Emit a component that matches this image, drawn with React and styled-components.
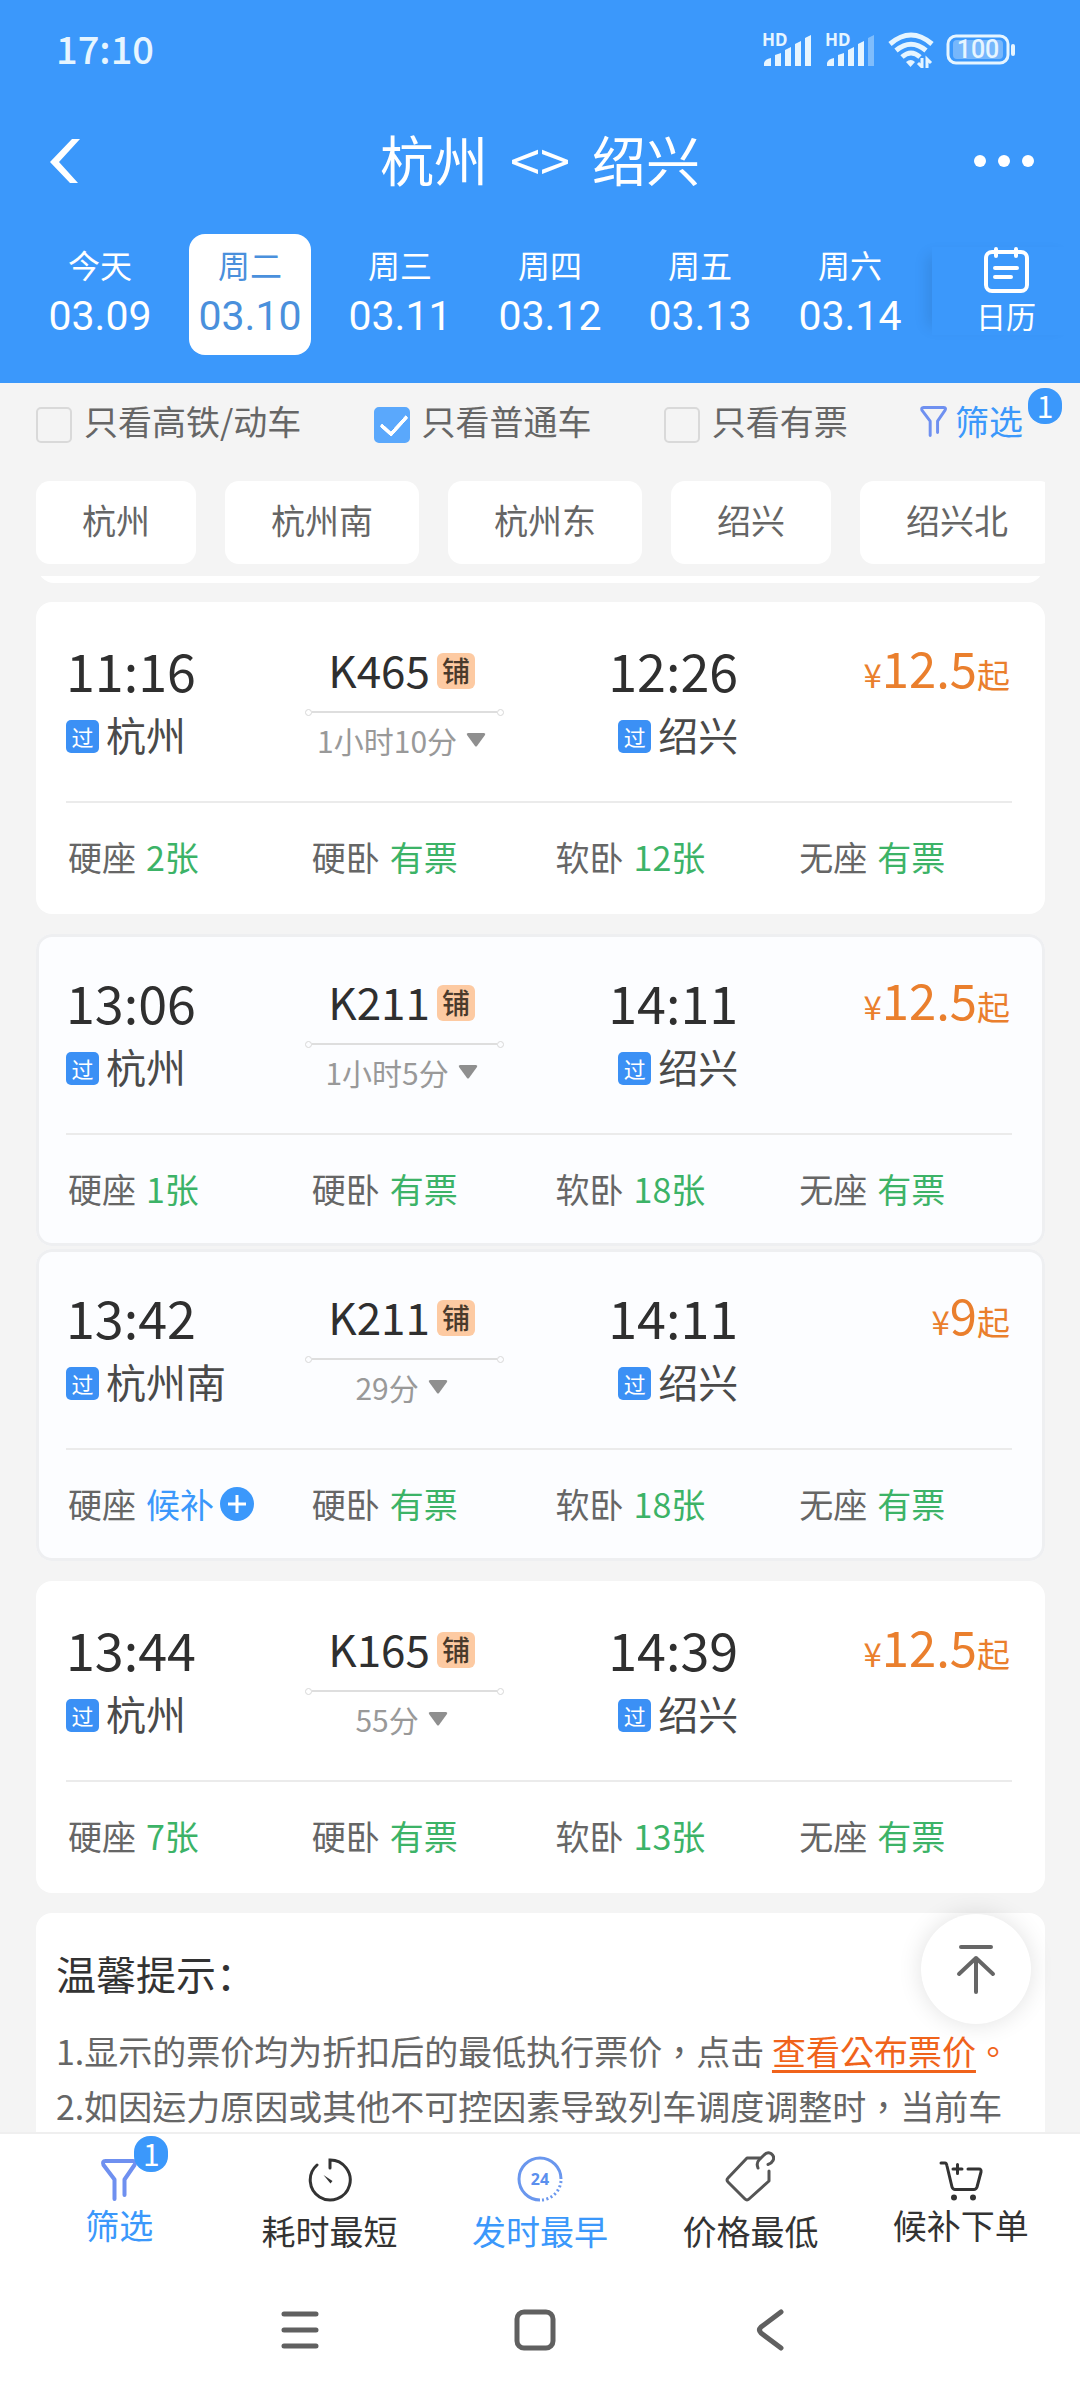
import React, { useState } from 'react';
import styled, { createGlobalStyle, css } from 'styled-components';

const GlobalStyle = createGlobalStyle`
  * {
    box-sizing: border-box;
  }

  body {
    margin: 0;
    background: #f4f4f4;
    font-family: 'Noto Sans CJK SC', sans-serif;
    color: #333;
  }

  button {
    border: none;
    background: none;
    padding: 0;
    font: inherit;
    color: inherit;
    cursor: pointer;
  }

  svg {
    display: block;
    flex: none;
  }
`;

const Page = styled.div`
  display: flex;
  flex-direction: column;
  height: 100vh;
`;

const Header = styled.header`
  flex: none;
  background: #3b98fb;
  color: #fff;
`;

const StatusBar = styled.div`
  display: flex;
  align-items: center;
  justify-content: space-between;
  height: 100px;
  padding: 0 64px 0 56px;
  color: #e6f5ff;
`;

const Clock = styled.span`
  padding-bottom: 4px;
  font-size: 38px;
  font-weight: 500;
  line-height: 44px;
`;

const StatusIcons = styled.div`
  display: flex;
  align-items: center;
  gap: 12px;
`;

const TitleBar = styled.div`
  display: flex;
  align-items: center;
  justify-content: space-between;
  height: 122px;
  padding: 0 45px;
`;

const Title = styled.h1`
  display: flex;
  gap: 22px;
  margin: 0;
  font-size: 54px;
  font-weight: 400;
  line-height: 60px;
  padding-bottom: 4px;
`;

const IconButton = styled.button`
  display: flex;
  align-items: center;
  width: 64px;
  justify-content: ${(props) => (props.$end ? 'flex-end' : 'flex-start')};
`;

const DateBar = styled.nav`
  display: flex;
  padding: 12px 0 28px 25px;
`;

const DateList = styled.div`
  display: flex;
  flex: 900;
`;

const DateButton = styled.button`
  display: flex;
  flex-direction: column;
  align-items: center;
  flex: 1;
  height: 121px;
  margin: 0 14px;
  padding-top: 7px;
  border-radius: 16px;
  white-space: nowrap;

  ${(props) =>
    props.$active &&
    css`
      background: #fff;
      color: #4a90dc;
    `}
`;

const Weekday = styled.span`
  font-size: 32px;
  line-height: 46px;
`;

const DayNumber = styled.span`
  margin-top: 4px;
  font-family: Roboto, sans-serif;
  font-size: 41px;
  line-height: 50px;
`;

const CalendarButton = styled.button`
  display: flex;
  flex-direction: column;
  align-items: center;
  flex: 148;
  height: 88px;
  margin: 13px 0 0 7px;
  font-size: 30px;
  line-height: 44px;
  background: #3b98fb;
  box-shadow: -12px 0 14px -8px rgba(0, 0, 0, 0.1);
`;

const Filters = styled.div`
  display: flex;
  align-items: center;
  justify-content: space-between;
  flex: none;
  height: 84px;
  padding: 0 57px 0 36px;
  font-size: 34px;
  line-height: 50px;
  color: #666;
`;

const FilterLabel = styled.label`
  display: flex;
  align-items: center;
  gap: 12px;

  span {
    padding-bottom: 8px;
  }
`;

const Checkbox = styled.input`
  position: relative;
  appearance: none;
  width: 36px;
  height: 36px;
  margin: 0;
  border: 2px solid #d9d9d9;
  border-radius: 5px;

  &:checked {
    border-color: #5aa8fc;
    background: #5aa8fc;
  }

  &:checked::after {
    content: '';
    position: absolute;
    left: 5px;
    top: 5px;
    width: 22px;
    height: 12px;
    border-left: 4px solid #fff;
    border-bottom: 4px solid #fff;
    border-radius: 2px;
    transform: rotate(-48deg);
  }
`;

const FilterButton = styled.button`
  position: relative;
  display: flex;
  align-items: center;
  gap: 8px;
  padding-bottom: 8px;
  color: #3b98fb;
`;

const Badge = styled.span`
  position: absolute;
  top: -8px;
  left: 100%;
  width: 34px;
  height: 36px;
  margin-left: 5px;
  border-radius: 16px;
  background: #3b98fb;
  color: #fff;
  font-size: 30px;
  line-height: 34px;
  text-align: center;
`;

const Stations = styled.div`
  display: flex;
  flex: none;
  gap: 29px;
  margin: 14px 35px 12px 36px;
  overflow: hidden;
`;

const StationChip = styled.button`
  flex: none;
  height: 83px;
  padding: 0 46px 6px;
  border-radius: 14px;
  background: #fff;
  color: #666;
  font-size: 34px;
  line-height: 50px;
`;

const Results = styled.main`
  position: relative;
  flex: 1;
  min-height: 0;
  padding: 0 35px 0 36px;
  overflow: hidden;
`;

const ScrolledCard = styled.div`
  display: flex;
  align-items: flex-end;
  height: 7px;
  margin-bottom: 19px;
  overflow: hidden;

  &::before {
    content: '';
    flex: 1;
    height: 40px;
    margin: 0 2px;
    border-radius: 16px;
    background: #fff;
  }
`;

const Card = styled.article`
  height: 312px;
  margin-bottom: ${(props) => (props.$joined ? '3px' : '20px')};
  padding: 0 33px 0 30px;
  border-radius: 16px;
  background: ${(props) => (props.$grouped ? '#fcfdff' : '#fff')};
  box-shadow: ${(props) => (props.$grouped ? 'inset 0 0 0 3px #eeeff1' : 'none')};
`;

const Trip = styled.div`
  display: grid;
  grid-template-columns: 48fr 40fr 47fr 55fr;
  height: 201px;
  padding-top: 38px;
  border-bottom: 2px solid #ebebeb;
`;

const Stop = styled.div`
  display: flex;
  flex-direction: column;
  align-items: ${(props) => (props.$end ? 'flex-end' : 'flex-start')};
`;

const Time = styled.span`
  font-size: 52px;
  line-height: 60px;
  color: #2f2f2f;
`;

const StopName = styled.span`
  display: flex;
  align-items: center;
  gap: 7px;
  font-size: 40px;
  line-height: 68px;
  color: #4a4a4a;
`;

const PassTag = styled.span`
  width: 33px;
  height: 33px;
  margin-top: 4px;
  border-radius: 5px;
  background: #3b90f5;
  color: #fff;
  font-size: 22px;
  line-height: 32px;
  text-align: center;
`;

const Train = styled.div`
  display: flex;
  flex-direction: column;
  align-items: center;
`;

const TrainNumber = styled.span`
  display: flex;
  align-items: center;
  gap: 7px;
  padding-right: 6px;
  font-size: 44px;
  line-height: 58px;
  color: #2f2f2f;
`;

const BerthTag = styled.span`
  width: 38px;
  height: 36px;
  margin-top: 4px;
  border-radius: 6px;
  background: #fdcaa2;
  color: #4a3a2c;
  font-size: 28px;
  font-weight: 500;
  line-height: 34px;
  text-align: center;
`;

const TrackLine = styled.div`
  display: flex;
  align-items: center;
  width: 100%;
  height: 6px;
  margin-top: 11px;

  &::before,
  &::after {
    content: '';
    width: 5px;
    height: 5px;
    border: 1px solid #d8d8d8;
    border-radius: 50%;
  }

  span {
    flex: 1;
    height: 2px;
    background: #dedede;
  }
`;

const Duration = styled.button`
  display: flex;
  align-items: center;
  gap: 9px;
  padding-right: 6px;
  font-size: 30px;
  line-height: 50px;
  color: #999;
`;

const Price = styled.div`
  display: flex;
  align-items: baseline;
  justify-content: flex-end;
  padding-right: 2px;
  font-size: 33px;
  line-height: 54px;
  color: #ea7f2d;

  strong {
    font-size: 49px;
    font-weight: 400;
  }
`;

const Seats = styled.div`
  display: grid;
  grid-template-columns: 47fr 47fr 47fr 41fr;
  align-items: center;
  height: 108px;
  padding-left: 2px;
  font-size: 34px;
  line-height: 50px;
  color: #666;
  white-space: nowrap;
`;

const Seat = styled.div`
  display: flex;
  align-items: center;
  gap: 10px;
`;

const SeatLeft = styled.span`
  display: flex;
  align-items: center;
  gap: 6px;
  color: ${(props) => (props.$waitlist ? '#3b98fb' : '#3cb367')};
`;

const Notice = styled.section`
  padding: 28px 20px 40px;
  border-radius: 16px;
  background: #fff;
  color: #666;
  font-family: 'Noto Sans CJK TC', sans-serif;
  font-size: 34px;
  line-height: 55px;

  h2 {
    margin: 0 0 18px;
    color: #333;
    font-family: 'Noto Sans CJK SC', sans-serif;
    font-size: 40px;
    font-weight: 400;
    line-height: 64px;
  }

  p {
    margin: 0;
    white-space: nowrap;
  }
`;

const FareLink = styled.span`
  color: #f0631b;

  a {
    color: inherit;
    text-decoration-thickness: 3px;
    text-underline-offset: 5px;
  }
`;

const BackToTop = styled.button`
  position: absolute;
  right: 49px;
  bottom: 108px;
  display: flex;
  align-items: center;
  justify-content: center;
  width: 110px;
  height: 110px;
  border-radius: 50%;
  background: #fff;
  box-shadow: 0 0 24px rgba(0, 0, 0, 0.12);
`;

const TabBar = styled.nav`
  display: flex;
  flex: none;
  height: 128px;
  padding: 0 14px;
  border-top: 2px solid #efefef;
  background: #fff;
`;

const Tab = styled.button`
  display: flex;
  flex: 1;
  flex-direction: column;
  align-items: center;
  height: 120px;
  color: ${(props) => (props.$active ? '#3b98fb' : '#333')};
  font-size: 34px;
  line-height: 44px;
`;

const TabIcon = styled.span`
  position: relative;
  display: flex;
  align-items: flex-end;
  height: ${(props) => (props.$raised ? '67px' : '68px')};
  margin-bottom: ${(props) => (props.$raised ? '2px' : '7px')};
`;

const TabBadge = styled(Badge)`
  top: 2px;
  margin-left: -4px;
`;

const SystemNav = styled.div`
  display: flex;
  flex: none;
  align-items: center;
  justify-content: center;
  gap: 171px;
  height: 140px;
  padding-right: 10px;
  background: #fff;

  button {
    display: flex;
    justify-content: center;
    width: 64px;
  }
`;

const HdLabel = styled.text`
  font-family: 'Noto Sans', sans-serif;
  font-size: 17px;
  font-weight: 700;
`;

const BatteryLabel = styled.text`
  font-family: Roboto, sans-serif;
  font-size: 25px;
  font-weight: 500;
`;

const ClockLabel = styled.text`
  font-family: 'Noto Sans', sans-serif;
  font-size: 16px;
  font-weight: 700;
`;

function Signal({ weak }) {
  return (
    <svg width="51" height="48" viewBox="0 -7 51 48" fill="currentColor">
      <HdLabel x="0" y="13">HD</HdLabel>
      <path d="M2 33v-3q1-4 7-5v8z" />
      <path d="M13 33V22l6-2v13z" />
      <path d="M23 33V17l6-3v19z" />
      <path d="M33 33V11l6-3v25z" />
      <path d="M43 33V5l6-3v31z" opacity={weak ? 0.4 : 1} />
    </svg>
  );
}

function Wifi() {
  return (
    <svg width="46" height="36" viewBox="0 0 46 36" fill="none" stroke="currentColor" strokeWidth="5">
      <path d="M2 12Q23-6 44 12" />
      <path d="M8 18.500Q23 6 38 18.500" />
      <path d="M14 25Q23 17 32 25" />
      <path d="M18 30q5-4 9 0l-4.500 5z" fill="currentColor" stroke="none" />
      <path d="M34 26v9l-4-4M39 36v-9l4 4" strokeWidth="3" />
    </svg>
  );
}

function Battery() {
  return (
    <svg width="70" height="44" viewBox="0 -6 70 44" fill="none">
      <rect x="2" y="2" width="60" height="27" rx="8" stroke="currentColor" strokeWidth="3" />
      <rect x="7" y="6" width="50" height="19" rx="4" fill="#fff" opacity="0.3" />
      <path d="M67 12v8" stroke="currentColor" strokeWidth="4" strokeLinecap="round" />
      <BatteryLabel x="32" y="24" textAnchor="middle" fill="currentColor">100</BatteryLabel>
    </svg>
  );
}

function Funnel({ size }) {
  return (
    <svg
      width={size}
      height={size + 4}
      viewBox="0 0 36 42"
      fill="none"
      stroke="#6f90f0"
      strokeWidth="4"
      strokeLinecap="round"
      strokeLinejoin="round"
    >
      <path d="M13.500 40V20.500L2.500 6Q1 2 4.500 2H32q3.500 0 1.500 4L23.500 20.500V36" />
    </svg>
  );
}

function CalendarIcon() {
  return (
    <svg width="46" height="46" viewBox="0 0 46 46" fill="none" stroke="currentColor" strokeWidth="4" strokeLinecap="round">
      <rect x="3" y="5" width="41" height="39" rx="6" />
      <path d="M13 2v7M33 2v7M12 21h22M12 30h16" />
    </svg>
  );
}

function StopwatchIcon() {
  return (
    <svg width="44" height="44" viewBox="0 0 44 44" fill="none" stroke="currentColor" strokeWidth="3" strokeLinecap="round">
      <path d="M9 7A20 20 0 1 0 22 2v8" />
      <path d="M15.500 17l9 6-2 2.500z" fill="currentColor" stroke="none" />
    </svg>
  );
}

function Clock24Icon() {
  return (
    <svg width="46" height="46" viewBox="0 0 46 46" fill="none" stroke="#6a97ee" strokeWidth="3">
      <path d="M23 44A21 21 0 1 1 44 23" />
      <path d="M44 25A21 21 0 0 1 25 44" strokeDasharray="2 2.500" />
      <ClockLabel x="23" y="29" textAnchor="middle" fill="#5b8fee" stroke="none">24</ClockLabel>
    </svg>
  );
}

function PriceTagIcon() {
  return (
    <svg width="50" height="51" viewBox="0 0 50 51" fill="none" stroke="#555" strokeWidth="3" strokeLinecap="round" strokeLinejoin="round">
      <path d="M35 7H22L3 27q-2 2 0 4l17 17q2 2 4 0L44 30V20" />
      <path d="M33 17q-2-5 1-8l5-5q3-3.500 7-1.500 4 3 2 7-1.500 3-5 4" />
    </svg>
  );
}

function CartIcon() {
  return (
    <svg width="44" height="40" viewBox="0 0 44 40" fill="none" stroke="currentColor" strokeWidth="3" strokeLinecap="round" strokeLinejoin="round">
      <path d="M2 2h4q1.500 0 2 3l5 21q1 2.500 3 2.500h19q2 0 3-2.500l4-15q.5-3-2-3H29" />
      <path d="M18.500 3.500v9M14 8h9" />
      <circle cx="15" cy="36.500" r="1.500" fill="currentColor" />
      <circle cx="34" cy="36.500" r="1.500" fill="currentColor" />
    </svg>
  );
}

const dates = [
  { weekday: '今天', day: '03.09' },
  { weekday: '周二', day: '03.10' },
  { weekday: '周三', day: '03.11' },
  { weekday: '周四', day: '03.12' },
  { weekday: '周五', day: '03.13' },
  { weekday: '周六', day: '03.14' },
];

const filterOptions = ['只看高铁/动车', '只看普通车', '只看有票'];

const stations = ['杭州', '杭州南', '杭州东', '绍兴', '绍兴北'];

const trains = [
  {
    number: 'K465', depart: '11:16', from: '杭州', arrive: '12:26', to: '绍兴', duration: '1小时10分', price: '12.5',
    seats: [['硬座', '2张'], ['硬卧', '有票'], ['软卧', '12张'], ['无座', '有票']],
  },
  {
    number: 'K211', depart: '13:06', from: '杭州', arrive: '14:11', to: '绍兴', duration: '1小时5分', price: '12.5', grouped: true, joined: true,
    seats: [['硬座', '1张'], ['硬卧', '有票'], ['软卧', '18张'], ['无座', '有票']],
  },
  {
    number: 'K211', depart: '13:42', from: '杭州南', arrive: '14:11', to: '绍兴', duration: '29分', price: '9', grouped: true,
    seats: [['硬座', '候补'], ['硬卧', '有票'], ['软卧', '18张'], ['无座', '有票']],
  },
  {
    number: 'K165', depart: '13:44', from: '杭州', arrive: '14:39', to: '绍兴', duration: '55分', price: '12.5',
    seats: [['硬座', '7张'], ['硬卧', '有票'], ['软卧', '13张'], ['无座', '有票']],
  },
];

const tabs = [
  { label: '筛选', icon: <Funnel size={38} />, badge: 1, raised: true },
  { label: '耗时最短', icon: <StopwatchIcon /> },
  { label: '发时最早', icon: <Clock24Icon /> },
  { label: '价格最低', icon: <PriceTagIcon /> },
  { label: '候补下单', icon: <CartIcon />, raised: true },
];

function TrainCard({ train }) {
  return (
    <Card $grouped={train.grouped} $joined={train.joined}>
      <Trip>
        <Stop>
          <Time>{train.depart}</Time>
          <StopName>
            <PassTag>过</PassTag>
            {train.from}
          </StopName>
        </Stop>
        <Train>
          <TrainNumber>
            {train.number}
            <BerthTag>铺</BerthTag>
          </TrainNumber>
          <TrackLine>
            <span />
          </TrackLine>
          <Duration>
            {train.duration}
            <svg width="20" height="14" viewBox="0 0 20 14" fill="#8f8f8f">
              <path d="M2 0h16q2 .5 1 2L11 13q-1 1-2 0L1 2Q0 .5 2 0z" />
            </svg>
          </Duration>
        </Train>
        <Stop $end>
          <Time>{train.arrive}</Time>
          <StopName>
            <PassTag>过</PassTag>
            {train.to}
          </StopName>
        </Stop>
        <Price>
          ¥<strong>{train.price}</strong>起
        </Price>
      </Trip>
      <Seats>
        {train.seats.map(([name, left]) => (
          <Seat key={name}>
            {name}
            <SeatLeft $waitlist={left === '候补'}>
              {left}
              {left === '候补' && (
                <svg width="34" height="34" viewBox="0 0 34 34">
                  <circle cx="17" cy="17" r="17" fill="#3b98fb" />
                  <path d="M17 8v18M8 17h18" stroke="#fff" strokeWidth="3" />
                </svg>
              )}
            </SeatLeft>
          </Seat>
        ))}
      </Seats>
    </Card>
  );
}

function App() {
  const [activeDay, setActiveDay] = useState('03.10');
  const [checked, setChecked] = useState(['只看普通车']);
  const [sort, setSort] = useState('发时最早');

  const toggleFilter = (name) => {
    setChecked(checked.includes(name) ? checked.filter((item) => item !== name) : [...checked, name]);
  };

  return (
    <Page>
      <GlobalStyle />
      <Header>
        <StatusBar>
          <Clock>17:10</Clock>
          <StatusIcons>
            <Signal />
            <Signal weak />
            <Wifi />
            <Battery />
          </StatusIcons>
        </StatusBar>
        <TitleBar>
          <IconButton aria-label="返回">
            <svg width="36" height="44" viewBox="0 0 36 44" fill="#fff">
              <path d="M27 0h8L14 23l19 21h-8L5 23z" />
            </svg>
          </IconButton>
          <Title>
            <span>杭州</span>
            <span>&lt;&gt;</span>
            <span>绍兴</span>
          </Title>
          <IconButton $end aria-label="更多">
            <svg width="62" height="14" viewBox="0 0 62 14" fill="#fff">
              <circle cx="7" cy="7" r="6" />
              <circle cx="31" cy="7" r="6" />
              <circle cx="55" cy="7" r="6" />
            </svg>
          </IconButton>
        </TitleBar>
        <DateBar>
          <DateList>
            {dates.map((date) => (
              <DateButton key={date.day} $active={date.day === activeDay} onClick={() => setActiveDay(date.day)}>
                <Weekday>{date.weekday}</Weekday>
                <DayNumber>{date.day}</DayNumber>
              </DateButton>
            ))}
          </DateList>
          <CalendarButton>
            <CalendarIcon />
            日历
          </CalendarButton>
        </DateBar>
      </Header>

      <Filters>
        {filterOptions.map((name) => (
          <FilterLabel key={name}>
            <Checkbox type="checkbox" checked={checked.includes(name)} onChange={() => toggleFilter(name)} />
            <span>{name}</span>
          </FilterLabel>
        ))}
        <FilterButton>
          <Funnel size={27} />
          筛选
          <Badge>1</Badge>
        </FilterButton>
      </Filters>

      <Stations>
        {stations.map((name) => (
          <StationChip key={name}>{name}</StationChip>
        ))}
      </Stations>

      <Results>
        <ScrolledCard />
        {trains.map((train) => (
          <TrainCard key={train.depart} train={train} />
        ))}
        <Notice>
          <h2>温馨提示：</h2>
          <p>
            1.显示的票价均为折扣后的最低执行票价，点击{' '}
            <FareLink>
              <a href="#fares">查看公布票价</a>。
            </FareLink>
          </p>
          <p>2.如因运力原因或其他不可控因素导致列车调度调整时，当前车</p>
        </Notice>
        <BackToTop aria-label="返回顶部">
          <svg width="40" height="50" viewBox="0 0 40 50" fill="none" stroke="#666" strokeWidth="4" strokeLinecap="round" strokeLinejoin="round">
            <path d="M5 3h30M20 14v34M3 30l17-16 17 16" />
          </svg>
        </BackToTop>
      </Results>

      <TabBar>
        {tabs.map((tab) => (
          <Tab
            key={tab.label}
            $active={tab.label === sort || Boolean(tab.badge)}
            onClick={() => !tab.raised && setSort(tab.label)}
          >
            <TabIcon $raised={tab.raised}>
              {tab.icon}
              {tab.badge && <TabBadge>{tab.badge}</TabBadge>}
            </TabIcon>
            {tab.label}
          </Tab>
        ))}
      </TabBar>

      <SystemNav>
        <button aria-label="菜单">
          <svg width="40" height="40" viewBox="0 0 40 40" stroke="#606060" strokeWidth="5" strokeLinecap="round">
            <path d="M4 4h32M4 20h32M4 36h32" />
          </svg>
        </button>
        <button aria-label="主页">
          <svg width="42" height="42" viewBox="0 0 42 42" fill="none" stroke="#606060" strokeWidth="5">
            <rect x="3" y="3" width="36" height="36" rx="7" />
          </svg>
        </button>
        <button aria-label="后退">
          <svg width="28" height="42" viewBox="0 0 28 42" fill="none" stroke="#606060" strokeWidth="5" strokeLinecap="round" strokeLinejoin="round">
            <path d="M25 3L5 18q-3 3 0 6l20 15" />
          </svg>
        </button>
      </SystemNav>
    </Page>
  );
}

export default App;
